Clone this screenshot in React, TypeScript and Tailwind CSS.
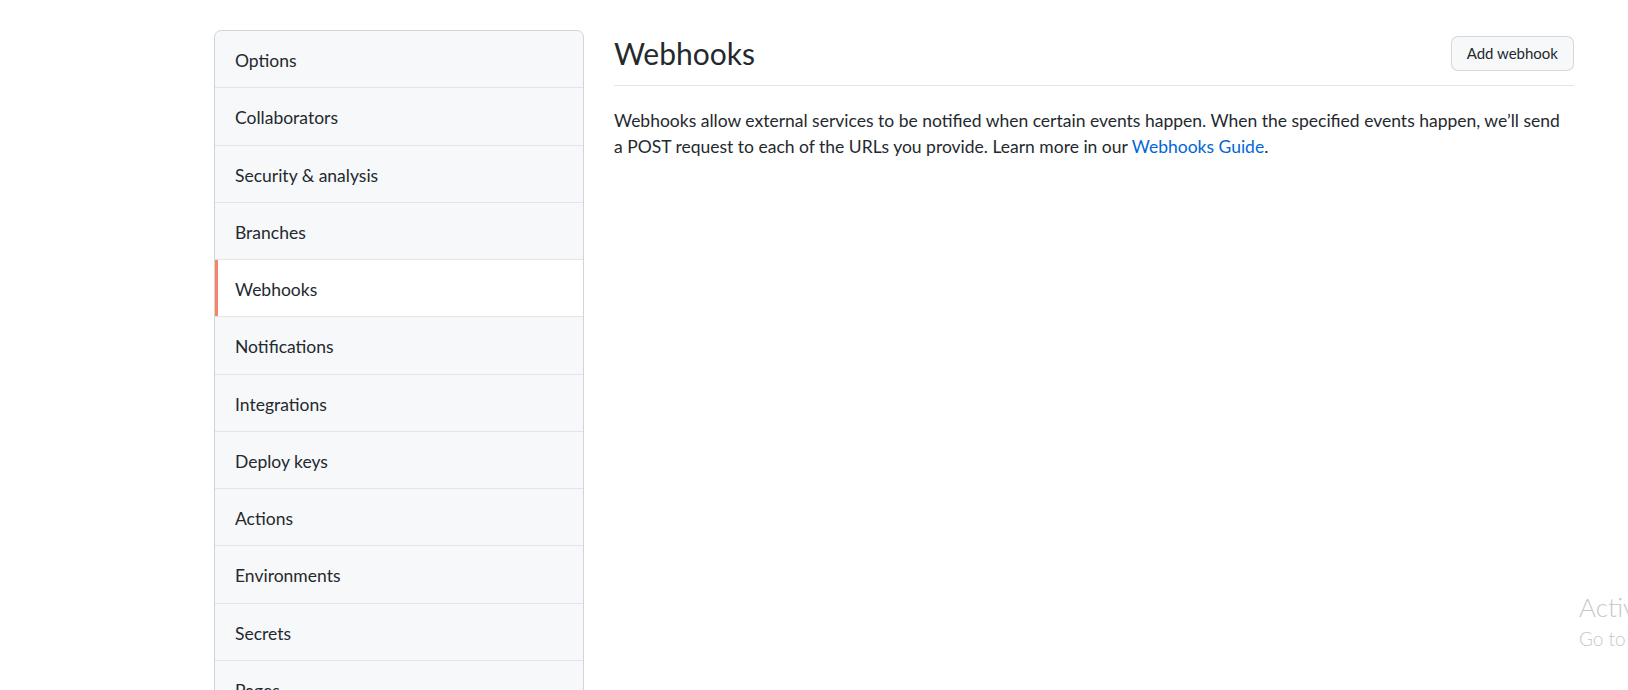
import React from "react";

const items = [
  "Options",
  "Collaborators",
  "Security & analysis",
  "Branches",
  "Webhooks",
  "Notifications",
  "Integrations",
  "Deploy keys",
  "Actions",
  "Environments",
  "Secrets",
  "Pages",
];

export default function App() {
  return (
    <div
      className="relative h-[690px] w-[1628px] overflow-hidden bg-white text-[#24292e]"
      style={{ fontFamily: 'Lato, "Noto Sans", Arial, sans-serif' }}
    >
      <div className="flex items-start gap-[30px] pl-[214px] pt-[30px]">
        <nav className="w-[370px] shrink-0 overflow-hidden rounded-[7px] border border-[#d1d5da] bg-[#f6f8fa]">
          {items.map((name, i) => {
            const active = name === "Webhooks";
            return (
              <a
                key={name}
                href="#"
                className={
                  "relative block px-[20px] pt-[17px] pb-[13px] text-[17.5px] leading-[26.25px] text-[#24292e] " +
                  (i > 0 ? "border-t border-[#e1e4e8] " : "") +
                  (active
                    ? "bg-white before:absolute before:left-0 before:top-0 before:bottom-0 before:w-[2.5px] before:bg-[#f9826c]"
                    : "")
                }
              >
                {name}
              </a>
            );
          })}
        </nav>

        <main className="w-[960px]">
          <div className="flex items-center justify-between border-b border-[#e1e4e8] pb-[9px]">
            <h2 className="pt-[1px] text-[30px] font-normal leading-[45px]">Webhooks</h2>
            <button className="h-[35px] rounded-[7px] border border-[rgba(27,31,36,0.15)] bg-[#f6f8fa] px-[15px] text-[15px] leading-[22px] text-[#24292e]">
              Add webhook
            </button>
          </div>
          <p className="mt-[22px] text-[17.5px] leading-[26.25px]">
            Webhooks allow external services to be notified when certain events happen. When the specified events happen, we’ll send
            <br />
            a POST request to each of the URLs you provide. Learn more in our{" "}
            <a href="#" className="text-[#0366d6]">
              Webhooks Guide
            </a>
            .
          </p>
        </main>
      </div>

      <div className="pointer-events-none absolute left-[1579px] top-[590px] whitespace-nowrap text-[#c8c8c8]">
        <div className="text-[26px] font-light leading-[34px]">Activate Windows</div>
        <div className="mt-[2px] text-[19px] font-light leading-[26px]">Go to Settings to activate Windows.</div>
      </div>
    </div>
  );
}
